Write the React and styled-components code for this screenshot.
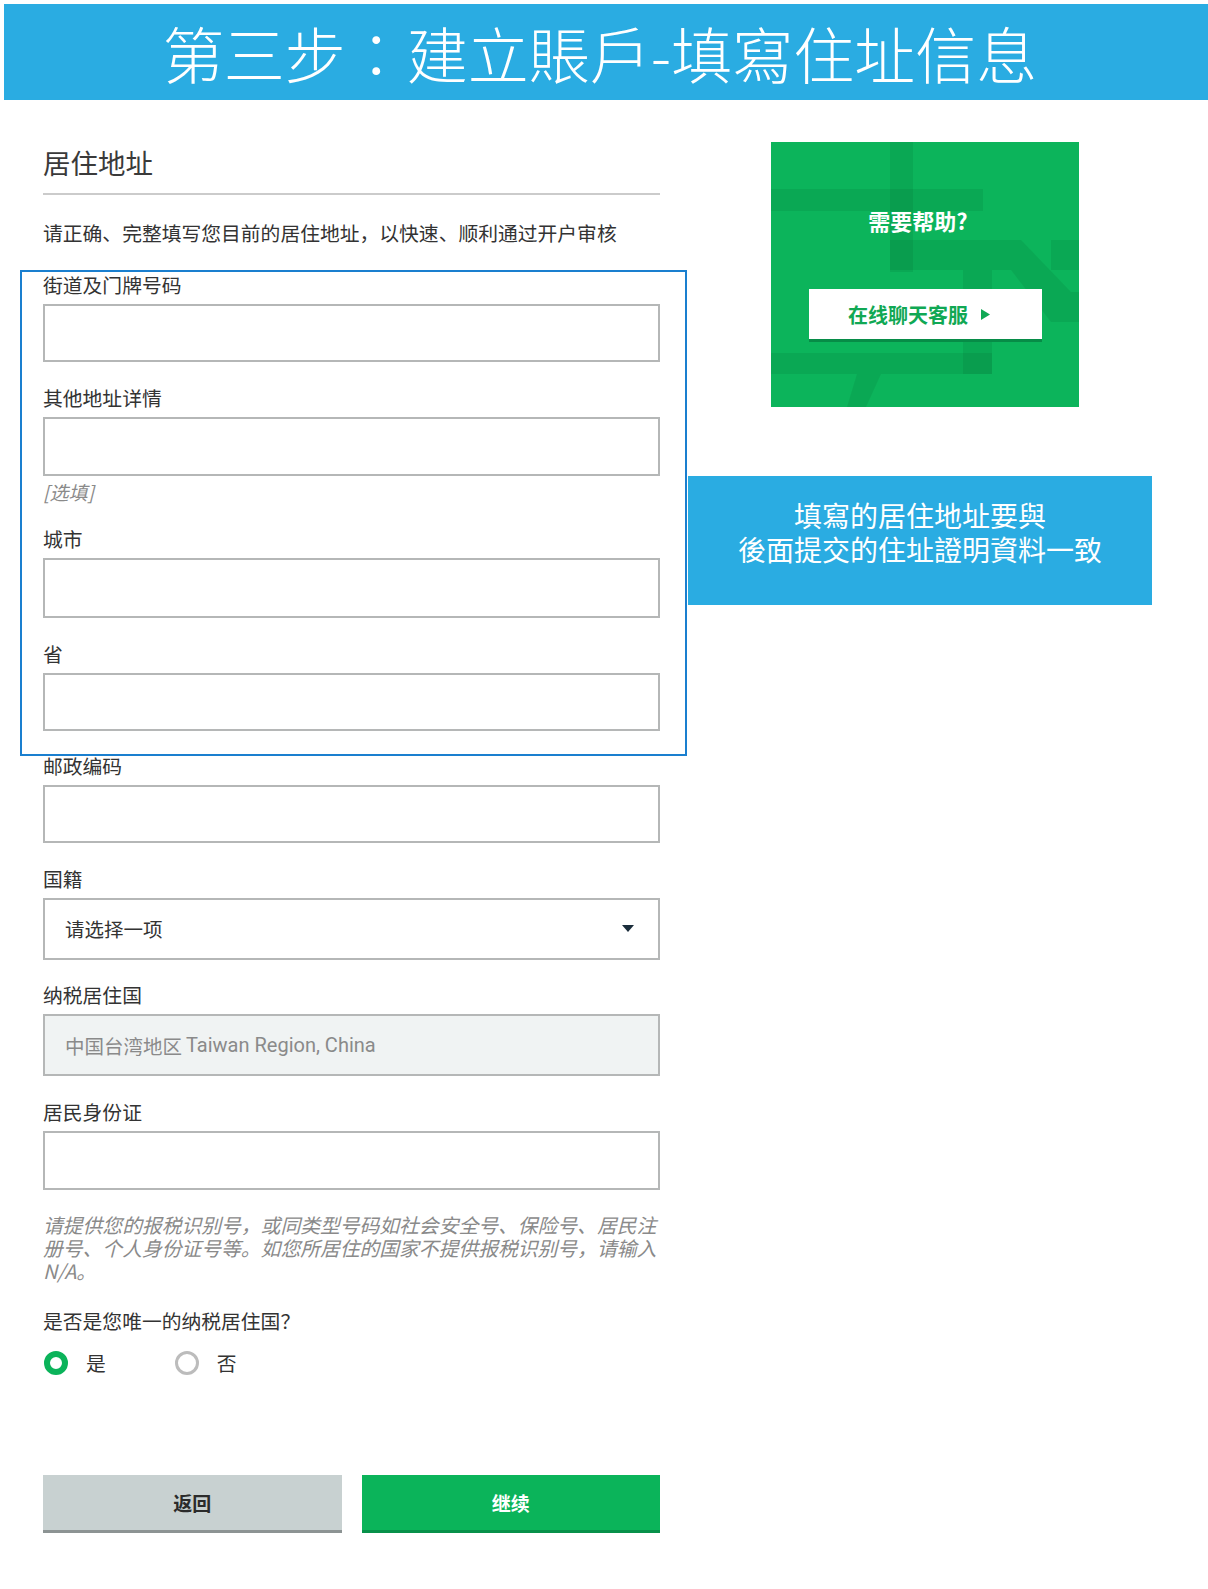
import React from 'react'
import styled, { createGlobalStyle } from 'styled-components'

const GlobalStyle = createGlobalStyle`
  html, body {
    margin: 0;
    padding: 0;
    background: #fff;
    overflow: hidden;
  }
  body {
    font-family: "Noto Sans CJK SC", "Noto Sans", sans-serif;
    color: #333;
  }
`

const fields = [
  { label: '街道及门牌号码', height: 58 },
  { label: '其他地址详情', height: 59, hint: '[选填]' },
  { label: '城市', height: 60 },
  { label: '省', height: 58 },
  { label: '邮政编码', height: 58 },
]

export default function App() {
  return (
    <Page>
      <GlobalStyle />
      <Banner>第三步：建立賬戶-填寫住址信息</Banner>
      <Body>
        <FormColumn>
          <SectionTitle>居住地址</SectionTitle>
          <Divider />
          <Intro>请正确、完整填写您目前的居住地址，以快速、顺利通过开户审核</Intro>

          {fields.map((f) => (
            <Field key={f.label}>
              <Label>{f.label}</Label>
              <Input $h={f.height} />
              {f.hint && <Hint>{f.hint}</Hint>}
            </Field>
          ))}

          <Field>
            <Label>国籍</Label>
            <Select $h={62}>
              <span>请选择一项</span>
              <Caret />
            </Select>
          </Field>

          <Field>
            <Label>纳税居住国</Label>
            <Input $h={62} $disabled>
              中国台湾地区 <Latin>Taiwan Region, China</Latin>
            </Input>
          </Field>

          <Field>
            <Label>居民身份证</Label>
            <Input $h={59} />
          </Field>

          <Note>
            <NoteLine>请提供您的报税识别号，或同类型号码如社会安全号、保险号、居民注</NoteLine>
            <NoteLine>册号、个人身份证号等。如您所居住的国家不提供报税识别号，请输入</NoteLine>
            <NoteLine>N/A。</NoteLine>
          </Note>

          <Question>是否是您唯一的纳税居住国？</Question>
          <RadioRow>
            <RadioItem>
              <RadioDot $checked />
              <span>是</span>
            </RadioItem>
            <RadioItem>
              <RadioDot />
              <span>否</span>
            </RadioItem>
          </RadioRow>

          <ButtonRow>
            <Button $variant="back">返回</Button>
            <Button $variant="next">继续</Button>
          </ButtonRow>
        </FormColumn>

        <SideColumn>
          <HelpCard>
            <CardPattern viewBox="0 0 308 265" preserveAspectRatio="none">
              <g fill="rgba(0,60,20,0.09)">
                <rect x="119" y="0" width="23" height="130" />
                <rect x="0" y="47" width="212" height="22" />
                <polygon points="119,98 250,98 300,150 308,150 308,180 280,180 240,128 119,128" />
                <rect x="280" y="98" width="28" height="30" />
                <rect x="192" y="128" width="29" height="104" />
                <rect x="0" y="211" width="221" height="21" />
                <polygon points="86,232 110,232 95,265 76,265" />
              </g>
            </CardPattern>
            <HelpTitle>需要帮助?</HelpTitle>
            <ChatButton>
              在线聊天客服
              <PlayIcon viewBox="0 0 10 12">
                <polygon points="0,0 10,6 0,12" />
              </PlayIcon>
            </ChatButton>
          </HelpCard>
        </SideColumn>

        <HighlightFrame />
        <Callout>
          填寫的居住地址要與
          <br />
          後面提交的住址證明資料一致
        </Callout>
      </Body>
    </Page>
  )
}

const Page = styled.div`
  width: 1208px;
  height: 1589px;
  padding-top: 4px;
  padding-left: 4px;
  box-sizing: border-box;
  overflow: hidden;
`

const Banner = styled.h1`
  margin: 0;
  height: 96px;
  background: #2aace2;
  color: #fff;
  display: flex;
  align-items: center;
  justify-content: center;
  padding-right: 12px;
  font-family: "Noto Sans CJK TC", "Noto Sans", sans-serif;
  font-weight: 300;
  font-size: 61px;
`

const Body = styled.div`
  position: relative;
  display: flex;
  align-items: flex-start;
  padding-left: 39px;
`

const FormColumn = styled.div`
  width: 617px;
  padding-top: 46px;
  display: flex;
  flex-direction: column;
`

const SectionTitle = styled.h2`
  margin: 0;
  font-size: 27.5px;
  line-height: 32px;
  font-weight: 400;
  color: #3a3a3a;
`

const Divider = styled.div`
  height: 2px;
  background: #cbcbcb;
  margin-top: 15px;
`

const Intro = styled.p`
  margin: 26px 0 28px;
  font-size: 19.8px;
  line-height: 24px;
  color: #333;
`

const Field = styled.div`
  display: flex;
  flex-direction: column;
  margin-bottom: 23.5px;
`

const Label = styled.label`
  font-size: 19.8px;
  line-height: 24px;
  color: #333;
  margin-bottom: 7px;
`

const Input = styled.div`
  height: ${(p) => p.$h}px;
  box-sizing: border-box;
  border: 2px solid #b5b7b7;
  background: ${(p) => (p.$disabled ? '#f0f3f3' : '#fff')};
  color: #8a8a8a;
  font-size: 19.5px;
  display: flex;
  align-items: center;
  padding: 0 20px;
  gap: 4px;
`

const Latin = styled.span`
  font-family: Roboto, "Noto Sans", sans-serif;
  font-size: 20px;
`

const Select = styled(Input)`
  color: #333;
  justify-content: space-between;
  padding-right: 24px;
`

const Caret = styled.span`
  width: 0;
  height: 0;
  border-left: 6px solid transparent;
  border-right: 6px solid transparent;
  border-top: 7px solid #1b2d3b;
`

const Hint = styled.span`
  font-style: italic;
  font-size: 19px;
  line-height: 24px;
  color: #8a8a8a;
  margin-top: 4px;
`

const Note = styled.div`
  margin: 0 0 27px;
  display: flex;
  flex-direction: column;
`

const NoteLine = styled.span`
  font-style: italic;
  font-size: 19.8px;
  line-height: 23px;
  color: #8a8a8a;
  white-space: nowrap;
`

const Question = styled.p`
  margin: 0 0 15px;
  font-size: 19.8px;
  line-height: 24px;
  color: #333;
`

const RadioRow = styled.div`
  display: flex;
  align-items: center;
  gap: 69px;
  padding-left: 1px;
`

const RadioItem = styled.label`
  display: flex;
  align-items: center;
  gap: 18px;
  font-size: 19.8px;
  color: #333;
`

const RadioDot = styled.span`
  width: 24px;
  height: 24px;
  border-radius: 50%;
  box-sizing: border-box;
  border: ${(p) => (p.$checked ? '6px solid #0bb35a' : '3px solid #bcbcbc')};
  background: #fff;
`

const ButtonRow = styled.div`
  display: flex;
  gap: 20px;
  margin-top: 98px;
`

const Button = styled.button`
  flex: 1;
  height: 58px;
  border: none;
  border-bottom: 3px solid ${(p) => (p.$variant === 'next' ? '#07914a' : '#8c9393')};
  background: ${(p) => (p.$variant === 'next' ? '#0bb45a' : '#c8d1d1')};
  color: ${(p) => (p.$variant === 'next' ? '#fff' : '#2b2b2b')};
  font-family: "Noto Sans CJK SC", sans-serif;
  font-size: 19px;
  font-weight: 700;
  cursor: pointer;
`

const SideColumn = styled.div`
  margin-left: 111px;
  padding-top: 42px;
`

const HelpCard = styled.div`
  position: relative;
  width: 308px;
  height: 265px;
  background: #0cb45b;
  display: flex;
  flex-direction: column;
  align-items: center;
  overflow: hidden;
`

const CardPattern = styled.svg`
  position: absolute;
  inset: 0;
  width: 100%;
  height: 100%;
`

const HelpTitle = styled.div`
  position: relative;
  margin-top: 63px;
  margin-right: 14px;
  color: #fff;
  font-size: 22px;
  line-height: 30px;
  font-weight: 700;
`

const ChatButton = styled.div`
  position: relative;
  margin-top: 54px;
  width: 233px;
  height: 53px;
  box-sizing: border-box;
  background: #fff;
  border-bottom: 3px solid #078c47;
  display: flex;
  align-items: center;
  justify-content: center;
  gap: 13px;
  padding-right: 12px;
  color: #10a854;
  font-size: 20px;
  font-weight: 700;
`

const PlayIcon = styled.svg`
  width: 9px;
  height: 11px;
  fill: #10a854;
`

const HighlightFrame = styled.div`
  position: absolute;
  left: 16px;
  top: 170px;
  width: 667px;
  height: 486px;
  box-sizing: border-box;
  border: 2px solid #1a7fcf;
  pointer-events: none;
`

const Callout = styled.div`
  position: absolute;
  left: 684px;
  top: 376px;
  width: 464px;
  height: 129px;
  box-sizing: border-box;
  padding-top: 22px;
  background: #2aace2;
  color: #fff;
  text-align: center;
  font-family: "Noto Sans CJK TC", "Noto Sans", sans-serif;
  font-size: 28px;
  line-height: 34px;
`
